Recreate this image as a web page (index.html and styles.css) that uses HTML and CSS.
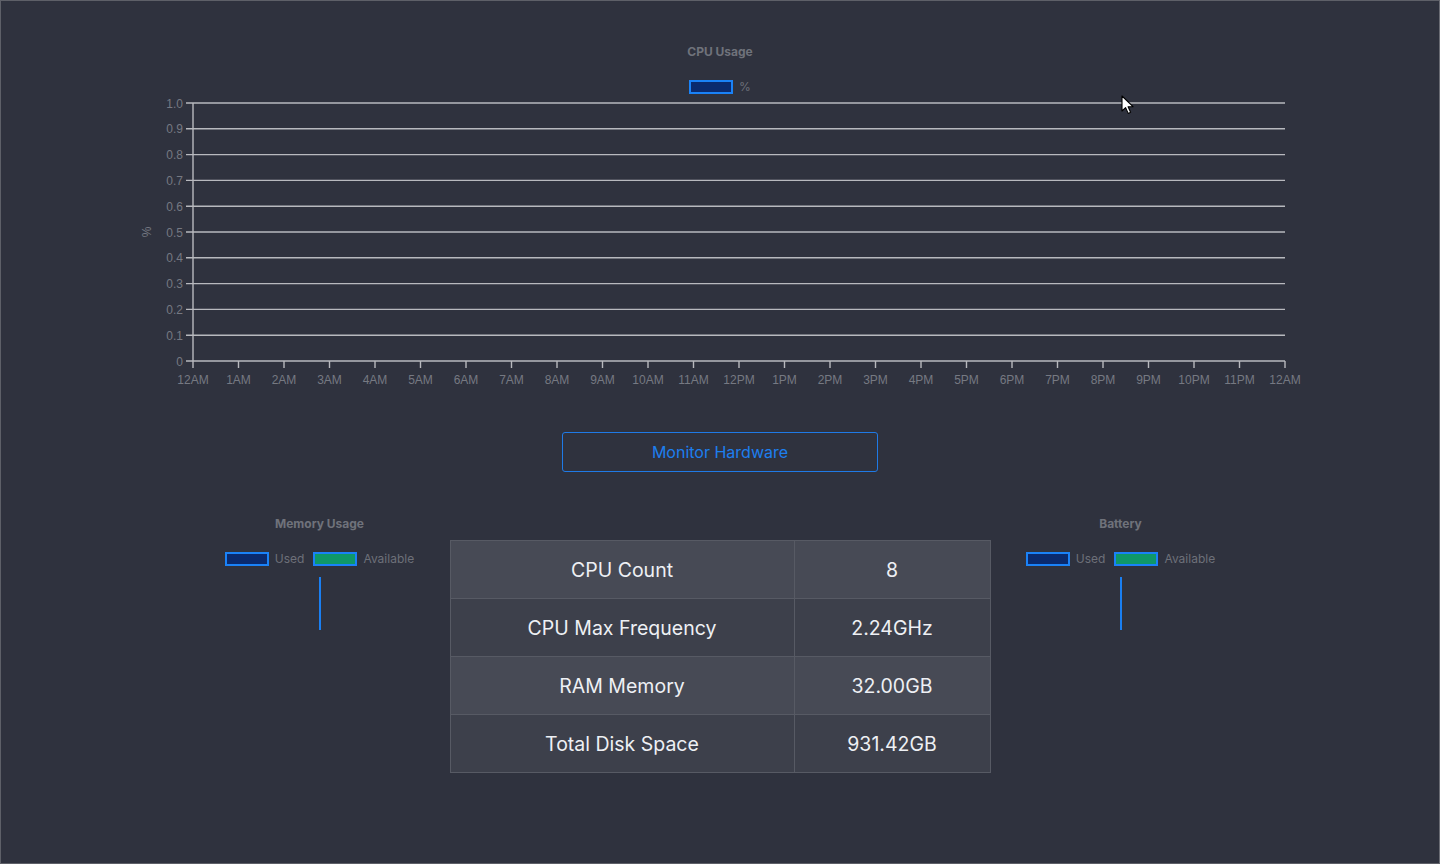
FILE: index.html
```html
<!DOCTYPE html>
<html lang="en">
<head>
<meta charset="utf-8">
<title>Hardware Monitor</title>
<link rel="stylesheet" href="styles.css">
</head>
<body>
<div class="frame">
  <section class="cpu-chart">
    <h2 class="chart-title">CPU Usage</h2>
    <div class="legend">
      <span class="swatch swatch-used"></span><span class="legend-label">%</span>
    </div>
    <svg class="plot" width="1440" height="300" viewBox="0 96 1440 300" xmlns="http://www.w3.org/2000/svg">
      <text class="axis-title" x="0" y="0" transform="translate(151 232) rotate(-90)" text-anchor="middle">%</text>
      <path class="grid" d="M186 103H1285M186 128.8H1285M186 154.6H1285M186 180.4H1285M186 206.2H1285M186 232H1285M186 257.8H1285M186 283.6H1285M186 309.4H1285M186 335.2H1285M186 361H1285"/>
      <path class="grid" d="M193 103V368M238.5 361V368M284 361V368M329.5 361V368M375 361V368M420.5 361V368M466 361V368M511.5 361V368M557 361V368M602.5 361V368M648 361V368M693.5 361V368M739 361V368M784.5 361V368M830 361V368M875.5 361V368M921 361V368M966.5 361V368M1012 361V368M1057.5 361V368M1103 361V368M1148.5 361V368M1194 361V368M1239.5 361V368M1285 361V368"/>
      <g class="ylabels" text-anchor="end">
        <text x="183" y="107.5">1.0</text>
        <text x="183" y="133.3">0.9</text>
        <text x="183" y="159.1">0.8</text>
        <text x="183" y="184.9">0.7</text>
        <text x="183" y="210.7">0.6</text>
        <text x="183" y="236.5">0.5</text>
        <text x="183" y="262.3">0.4</text>
        <text x="183" y="288.1">0.3</text>
        <text x="183" y="313.9">0.2</text>
        <text x="183" y="339.7">0.1</text>
        <text x="183" y="365.5">0</text>
      </g>
      <g class="xlabels" text-anchor="middle">
        <text x="193" y="383.5">12AM</text>
        <text x="238.5" y="383.5">1AM</text>
        <text x="284" y="383.5">2AM</text>
        <text x="329.5" y="383.5">3AM</text>
        <text x="375" y="383.5">4AM</text>
        <text x="420.5" y="383.5">5AM</text>
        <text x="466" y="383.5">6AM</text>
        <text x="511.5" y="383.5">7AM</text>
        <text x="557" y="383.5">8AM</text>
        <text x="602.5" y="383.5">9AM</text>
        <text x="648" y="383.5">10AM</text>
        <text x="693.5" y="383.5">11AM</text>
        <text x="739" y="383.5">12PM</text>
        <text x="784.5" y="383.5">1PM</text>
        <text x="830" y="383.5">2PM</text>
        <text x="875.5" y="383.5">3PM</text>
        <text x="921" y="383.5">4PM</text>
        <text x="966.5" y="383.5">5PM</text>
        <text x="1012" y="383.5">6PM</text>
        <text x="1057.5" y="383.5">7PM</text>
        <text x="1103" y="383.5">8PM</text>
        <text x="1148.5" y="383.5">9PM</text>
        <text x="1194" y="383.5">10PM</text>
        <text x="1239.5" y="383.5">11PM</text>
        <text x="1285" y="383.5">12AM</text>
      </g>
    </svg>
  </section>

  <div class="actions">
    <button class="monitor-btn" type="button">Monitor Hardware</button>
  </div>

  <section class="stats">
    <div class="gauge">
      <h3 class="gauge-title">Memory Usage</h3>
      <div class="legend">
        <span class="swatch swatch-used"></span><span class="legend-label">Used</span>
        <span class="swatch swatch-avail"></span><span class="legend-label">Available</span>
      </div>
      <div class="gauge-bar"></div>
    </div>

    <table class="specs">
      <tbody>
        <tr><td>CPU Count</td><td>8</td></tr>
        <tr><td>CPU Max Frequency</td><td>2.24GHz</td></tr>
        <tr><td>RAM Memory</td><td>32.00GB</td></tr>
        <tr><td>Total Disk Space</td><td>931.42GB</td></tr>
      </tbody>
    </table>

    <div class="gauge">
      <h3 class="gauge-title">Battery</h3>
      <div class="legend">
        <span class="swatch swatch-used"></span><span class="legend-label">Used</span>
        <span class="swatch swatch-avail"></span><span class="legend-label">Available</span>
      </div>
      <div class="gauge-bar"></div>
    </div>
  </section>

  <svg class="cursor" width="14" height="20" viewBox="0 0 14 20" xmlns="http://www.w3.org/2000/svg">
    <path d="M1 1V16L4.6 12.6L7.2 18.4L9.6 17.3L7.1 11.7H12Z" fill="#ffffff" stroke="#000000" stroke-width="1.1" stroke-linejoin="round"/>
  </svg>
</div>
</body>
</html>
```

FILE: styles.css
```css
* {
  box-sizing: border-box;
}

html, body {
  margin: 0;
  padding: 0;
  background: #2f323e;
}

body {
  font-family: Inter, "Noto Sans", sans-serif;
  color: #6f727b;
}

.frame {
  position: relative;
  width: 1440px;
  height: 864px;
  border: 1px solid #5e6068;
  border-right-color: #6a6c74;
  background: #2f323e;
  overflow: hidden;
}

.cpu-chart {
  display: flex;
  flex-direction: column;
  align-items: center;
}

.chart-title {
  margin: 44px 0 0;
  font-size: 12px;
  line-height: 14px;
  font-weight: 700;
  color: #6f727b;
}

.legend {
  display: flex;
  align-items: center;
  height: 14px;
  margin-top: 21px;
}

.swatch {
  display: inline-block;
  width: 44px;
  height: 14px;
  border: 2px solid #1a82f7;
  margin-right: 6px;
}

.swatch-used {
  background: #0a2a6e;
}

.swatch-avail {
  background: #0f9869;
  margin-left: 9px;
}

.legend-label {
  font-size: 12px;
  line-height: 14px;
  color: #6d7079;
}

.plot {
  display: block;
  margin-top: 2px;
  flex: none;
}

.grid {
  fill: none;
  stroke: #b8b9be;
  stroke-width: 1.4;
}

.ylabels text,
.xlabels text,
.axis-title {
  font-family: "Liberation Sans", Arial, sans-serif;
  font-size: 12px;
  fill: #767982;
}

.actions {
  display: flex;
  justify-content: center;
  margin-top: 36px;
}

.monitor-btn {
  width: 316px;
  height: 40px;
  border: 1px solid #1f7ae6;
  border-radius: 3px;
  background: transparent;
  color: #1d7fef;
  font-family: Inter, "Noto Sans", sans-serif;
  font-size: 16px;
  cursor: pointer;
}

.stats {
  display: flex;
  justify-content: center;
  align-items: flex-start;
  gap: 10px;
  margin-top: 45px;
}

.gauge {
  width: 240px;
  display: flex;
  flex-direction: column;
  align-items: center;
}

.gauge-title {
  margin: 0;
  font-size: 12px;
  line-height: 14px;
  font-weight: 700;
  color: #6f727b;
}

.gauge .legend {
  margin-top: 21px;
}

.gauge-bar {
  width: 2px;
  height: 53px;
  margin-top: 11px;
  background: #1a7ff2;
}

.specs {
  width: 541px;
  margin-top: 23px;
  border-collapse: collapse;
  border: 1px solid #575a64;
}

.specs td {
  height: 58px;
  padding: 0;
  border: 1px solid #575a64;
  text-align: center;
  font-size: 19.5px;
  color: #eef0f4;
}

.specs td:first-child {
  width: 344px;
}

.specs tr:nth-child(odd) td {
  background: #474a55;
}

.specs tr:nth-child(even) td {
  background: #3d404b;
}

.cursor {
  position: absolute;
  left: 1120px;
  top: 94px;
}
```
